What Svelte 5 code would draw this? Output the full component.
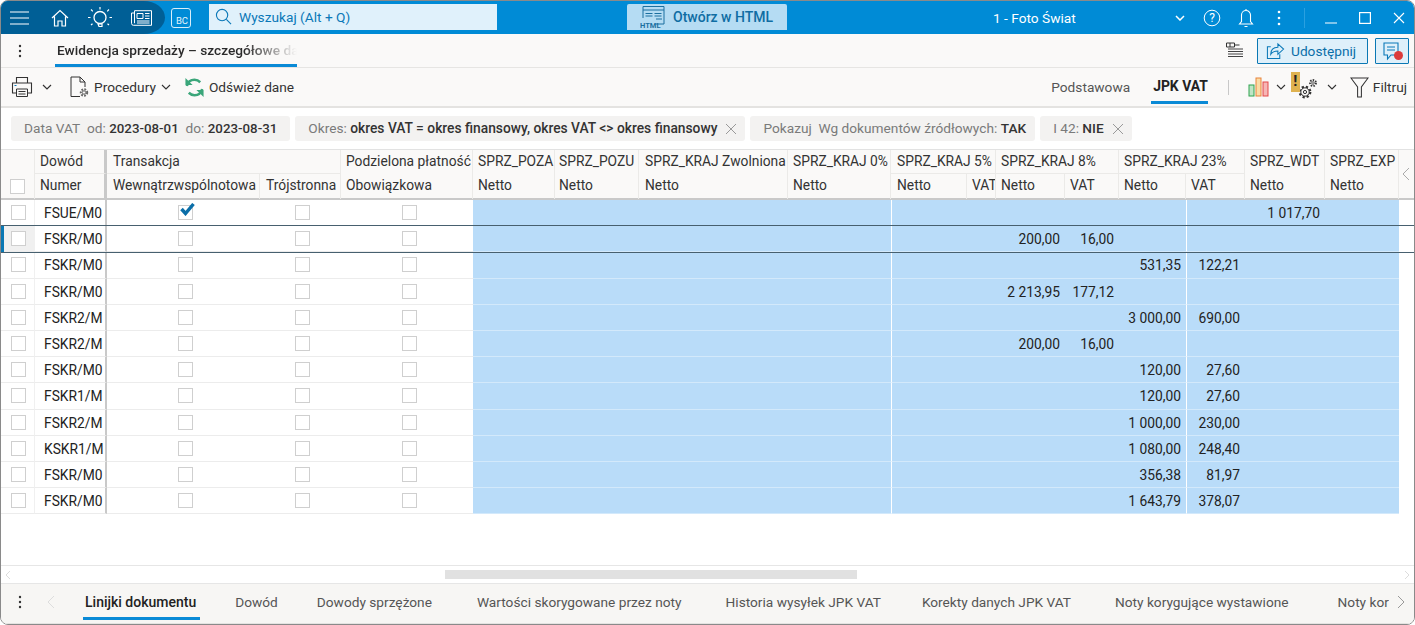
<script>
  const rows = [
    { doc: 'FSUE/M0', checked: true, v: { wdt: '1 017,70' } },
    { doc: 'FSKR/M0', selected: true, v: { n8: '200,00', v8: '16,00' } },
    { doc: 'FSKR/M0', v: { n23: '531,35', v23: '122,21' } },
    { doc: 'FSKR/M0', v: { n8: '2 213,95', v8: '177,12' } },
    { doc: 'FSKR2/M', v: { n23: '3 000,00', v23: '690,00' } },
    { doc: 'FSKR2/M', v: { n8: '200,00', v8: '16,00' } },
    { doc: 'FSKR/M0', v: { n23: '120,00', v23: '27,60' } },
    { doc: 'FSKR1/M', v: { n23: '120,00', v23: '27,60' } },
    { doc: 'FSKR2/M', v: { n23: '1 000,00', v23: '230,00' } },
    { doc: 'KSKR1/M', v: { n23: '1 080,00', v23: '248,40' } },
    { doc: 'FSKR/M0', v: { n23: '356,38', v23: '81,97' } },
    { doc: 'FSKR/M0', v: { n23: '1 643,79', v23: '378,07' } }
  ];
  const cols = ['poza', 'pozu', 'zw', 'k0', 'n5', 'v5', 'n8', 'v8', 'n23', 'v23', 'wdt', 'exp'];
  const tabs = ['Dowód', 'Dowody sprzężone', 'Wartości skorygowane przez noty', 'Historia wysyłek JPK VAT', 'Korekty danych JPK VAT', 'Noty korygujące wystawione'];
</script>

<div class="frame">
  <header class="topbar">
    <nav class="navzone">
      <svg class="ic ham" viewBox="0 0 20 14" width="20" height="14"><path d="M0 1h19M0 7h19M0 13h19" stroke="#fff" stroke-width="1.2" fill="none"/></svg>
      <svg class="ic" viewBox="0 0 18 18" width="18" height="18"><path d="M1 9 9 1.5 17 9M3.5 7.5V17h3.5v-5h4v5h3.5V7.5" stroke="#fff" stroke-width="1.2" fill="none"/></svg>
      <svg class="ic" viewBox="0 0 24 24" width="24" height="24"><circle cx="12" cy="11.5" r="6" stroke="#fff" stroke-width="1.3" fill="none"/><path d="M10 18h4v2.5h-3zM12 1v2.5M3 3.5 4.8 5.3M21 3.5l-1.8 1.8M0 11.500h2.500M21.500 11.500H24M3 19l1.500-1.300M21 19l-1.500-1.300" stroke="#fff" stroke-width="1.2" fill="none"/></svg>
      <svg class="ic" viewBox="0 0 21 16" width="21" height="16"><path d="M3.500.7h17v14.600H2.500a2 2 0 0 1-2-2V3h3M3.500.7v12.500" stroke="#fff" fill="none"/><path d="M6 3.500h6v5H6zM14 3.500h4.500M14 6h4.500M14 8.500h4.500M6 11h12.500M6 13h12.500" stroke="#fff" fill="none"/></svg>
    </nav>
    <div class="bc">BC</div>
    <div class="search">
      <svg viewBox="0 0 18 18" width="17" height="17"><circle cx="7.500" cy="7.500" r="6" stroke="#0a78b8" stroke-width="1.200" fill="none"/><path d="m12 12 5 5" stroke="#0a78b8" stroke-width="1.200"/></svg>
      <span>Wyszukaj (Alt + Q)</span>
    </div>
    <button class="html">
      <svg viewBox="0 0 26 24" width="26" height="24"><path d="M3 13V1.500h21V19h-8M3 5h21M5.500 8.500h7M14.500 8.500h7M5.500 11h7M14.500 11h7M16 14h6" stroke="#1b6f9f" fill="none"/><text x="0" y="23" class="htmltext">HTML</text></svg>
      <span>Otwórz w HTML</span>
    </button>
    <div class="company">1 - Foto Świat</div>
    <div class="winicons">
      <svg class="wchev" viewBox="0 0 10 6" width="10" height="6"><path d="m1 1 4 4 4-4" stroke="#fff" stroke-width="1.500" fill="none"/></svg>
      <svg class="mleft" viewBox="0 0 18 18" width="18" height="18"><circle cx="9" cy="9" r="7.800" stroke="#fff" fill="none"/><text x="9" y="13" class="qm">?</text></svg>
      <svg class="mleft2" viewBox="0 0 16 20" width="16" height="20"><path d="M1.500 16h13l-2-2.500V7a4.500 4.500 0 0 0-9 0v6.500zM8 1v1.500M6.500 18.500h3" stroke="#fff" stroke-width="1.100" fill="none"/></svg>
      <svg class="mleft3" viewBox="0 0 4 16" width="4" height="16"><circle cx="2" cy="2" r="1.300" fill="#fff"/><circle cx="2" cy="8" r="1.300" fill="#fff"/><circle cx="2" cy="14" r="1.300" fill="#fff"/></svg>
      <span class="vsep"></span>
      <svg class="wmin" viewBox="0 0 12 12" width="12" height="12"><path d="M0 11h12" stroke="#fff" stroke-width="1.200"/></svg>
      <svg class="wmax" viewBox="0 0 12 12" width="12" height="12"><rect x=".6" y=".6" width="10.800" height="10.800" stroke="#fff" stroke-width="1.200" fill="none"/></svg>
      <svg class="wmax" viewBox="0 0 12 12" width="12" height="12"><path d="m1 1 10 10M11 1 1 11" stroke="#fff" stroke-width="1.100"/></svg>
    </div>
  </header>

  <div class="titlebar">
    <svg class="dots" viewBox="0 0 4 14" width="4" height="14"><circle cx="2" cy="2" r="1.200" fill="#333"/><circle cx="2" cy="7" r="1.200" fill="#333"/><circle cx="2" cy="12" r="1.200" fill="#333"/></svg>
    <div class="pagetab"><span>Ewidencja sprzedaży – szczegółowe dane</span></div>
    <div class="grow"></div>
    <svg viewBox="0 0 19 17" width="19" height="17"><path d="M1.500 1h8v4h-8zM5 1v4M9.500 3h5" stroke="#333" fill="none"/><path d="M3 7h15M3 9.500h15M3 12h15M3 14.500h15" stroke="#444" stroke-width="1.100"/></svg>
    <button class="share">
      <svg viewBox="0 0 20 20" width="19" height="19"><path d="M5 6H1.500v12.500h13V14" stroke="#0a78b8" stroke-width="1.100" fill="none"/><path d="M5 14c0-5 3-7.500 7.500-7.500V3l6 5.500-6 5.500v-3.500C9 10.500 6.500 11.500 5 14z" stroke="#0a78b8" stroke-width="1.100" fill="none"/></svg>
      <span>Udostępnij</span>
    </button>
    <button class="comment">
      <svg viewBox="0 0 24 22" width="24" height="22"><path d="M3 2h14v12h-7l-3.500 4v-4H3z" stroke="#0a78b8" stroke-width="1.100" fill="#dff0fa"/><path d="M6 6h8M6 9h8" stroke="#0a78b8"/><circle cx="17.500" cy="14.500" r="4.500" fill="#dc3b3b"/></svg>
    </button>
  </div>

  <div class="toolbar">
    <svg viewBox="0 0 22 22" width="22" height="22"><path d="M5.500 7V1.500h11V7M5.500 17H1.500V7h19v10h-4" stroke="#333" stroke-width="1.100" fill="none"/><path d="M5.500 13h11v7.500h-11zM7.500 15.500h7M7.500 18h7" stroke="#333" fill="none"/><path d="M3.500 9.500h2" stroke="#0a78b8" stroke-width="1.200"/></svg>
    <svg class="chev c1" viewBox="0 0 10 6" width="10" height="6"><path d="m1 1 4 4 4-4" stroke="#333" stroke-width="1.200" fill="none"/></svg>
    <svg class="docic" viewBox="0 0 20 22" width="20" height="22"><path d="M10 20.500H1V1h9l5 5v5M10 1v5h5" stroke="#333" fill="none"/><circle cx="14" cy="16.500" r="3.200" stroke="#666" stroke-width="2" stroke-dasharray="1.800 1.200" fill="none"/><circle cx="14" cy="16.500" r="1.700" stroke="#666" fill="none"/></svg>
    <span class="tbtext t1">Procedury</span>
    <svg class="chev c2" viewBox="0 0 10 6" width="10" height="6"><path d="m1 1 4 4 4-4" stroke="#333" stroke-width="1.100" fill="none"/></svg>
    <svg class="refresh" viewBox="0 0 22 22" width="21" height="21"><path d="M3 9.500C4 5.500 7 3 11 3c2.500 0 4.500 1 6 2.500M19 12.500c-1 4-4 6.500-8 6.500-2.500 0-4.500-1-6-2.500" stroke="#3ba67a" stroke-width="2.600" fill="none"/><path d="M1.500 1v7.500H9zM20.500 21v-7.500H13z" fill="#3ba67a"/></svg>
    <span class="tbtext t2">Odśwież dane</span>
    <div class="grow"></div>
    <span class="view">Podstawowa</span>
    <span class="view active">JPK VAT</span>
    <span class="tsep"></span>
    <svg class="barsic" viewBox="0 0 22 20" width="22" height="20"><rect x="1" y="8" width="5" height="11" fill="#bfe5c6" stroke="#2ea44f"/><rect x="8" y="1" width="5" height="18" fill="#fbdca6" stroke="#e8833a"/><rect x="15" y="5" width="5" height="14" fill="#f6b5b5" stroke="#e34848"/></svg>
    <svg class="chev c3" viewBox="0 0 10 6" width="10" height="6"><path d="m1 1 4 4 4-4" stroke="#333" stroke-width="1.100" fill="none"/></svg>
    <div class="gearwrap">
      <svg viewBox="0 0 28 28" width="28" height="28"><circle cx="14" cy="20" r="5.300" stroke="#333" stroke-width="2.200" stroke-dasharray="2.200 2" fill="none"/><circle cx="14" cy="20" r="4.200" stroke="#333" fill="none"/><circle cx="14" cy="20" r="1.600" stroke="#333" fill="none"/><circle cx="22" cy="11" r="3" stroke="#333" stroke-width="1.800" stroke-dasharray="1.500 1.200" fill="none"/><circle cx="22" cy="11" r="1.300" stroke="#333" stroke-width=".8" fill="none"/></svg>
      <span class="warn">!</span>
    </div>
    <svg class="chev c4" viewBox="0 0 10 6" width="10" height="6"><path d="m1 1 4 4 4-4" stroke="#333" stroke-width="1.100" fill="none"/></svg>
    <svg class="funnel" viewBox="0 0 20 22" width="19" height="21"><path d="M1 1h18l-7 9.500V21H8V10.500z" stroke="#333" stroke-width="1.100" fill="none"/></svg>
    <span class="tbtext t3">Filtruj</span>
  </div>

  <div class="filters">
    <div class="chip"><span class="lab">Data VAT&nbsp; od:</span> <b class="date">2023-08-01</b><span class="lab">&nbsp;&nbsp;do:</span> <b class="date">2023-08-31</b></div>
    <div class="chip"><span class="lab">Okres:</span> <b class="long">okres VAT = okres finansowy, okres VAT &lt;&gt; okres finansowy</b><svg class="x" viewBox="0 0 10 10" width="10" height="10"><path d="m0 0 10 10M10 0 0 10" stroke="#999"/></svg></div>
    <div class="chip short"><span class="lab">Pokazuj&nbsp; Wg dokumentów źródłowych:</span> <b>TAK</b></div>
    <div class="chip"><span class="lab">I 42:</span> <b>NIE</b><svg class="x" viewBox="0 0 10 10" width="10" height="10"><path d="m0 0 10 10M10 0 0 10" stroke="#999"/></svg></div>
  </div>

  <div class="table">
    <div class="head">
      <div class="h sel"><span class="cb"></span></div>
      <div class="h under dow">Dowód</div>
      <div class="h under span2 p6">Transakcja</div>
      <div class="h">Podzielona płatność</div>
      <div class="h">SPRZ_POZA</div>
      <div class="h p4">SPRZ_POZU</div>
      <div class="h p6">SPRZ_KRAJ Zwolniona</div>
      <div class="h">SPRZ_KRAJ 0%</div>
      <div class="h under span2 p6">SPRZ_KRAJ 5%</div>
      <div class="h under span2">SPRZ_KRAJ 8%</div>
      <div class="h under span2">SPRZ_KRAJ 23%</div>
      <div class="h">SPRZ_WDT</div>
      <div class="h">SPRZ_EXP</div>
      <div class="h scroller">
        <svg viewBox="0 0 8 14" width="8" height="14"><path d="M7 1 1 7l6 6" stroke="#aaa" fill="none"/></svg>
      </div>

      <div class="h dow low">Numer</div>
      <div class="h low p6">Wewnątrzwspólnotowa</div>
      <div class="h low p6">Trójstronna</div>
      <div class="h low">Obowiązkowa</div>
      <div class="h low">Netto</div>
      <div class="h low p4">Netto</div>
      <div class="h low p6">Netto</div>
      <div class="h low">Netto</div>
      <div class="h low p6">Netto</div>
      <div class="h low">VAT</div>
      <div class="h low">Netto</div>
      <div class="h low">VAT</div>
      <div class="h low">Netto</div>
      <div class="h low">VAT</div>
      <div class="h low">Netto</div>
      <div class="h low">Netto</div>
    </div>

    {#each rows as r}
      <div class="row" class:selected={r.selected}>
        <div class="c first"><span class="cb"></span></div>
        <div class="c doc">{r.doc}</div>
        <div class="c chk"><span class="cb">{#if r.checked}<svg viewBox="0 0 15 13" width="15" height="13"><path d="m1.500 6 4 4.500 8-9.500" stroke="#0a6ea8" stroke-width="3.400" fill="none"/></svg>{/if}</span></div>
        <div class="c chk"><span class="cb"></span></div>
        <div class="c chk"><span class="cb"></span></div>
        {#each cols as k}
          <div class="c num" class:wl={k === 'n5' || k === 'v23'}>{r.v[k] ?? ''}</div>
        {/each}
      </div>
    {/each}
  </div>

  <div class="hscroll">
    <svg viewBox="0 0 6 10" width="6" height="10"><path d="M5 1 1 5l4 4" stroke="#ddd" fill="none"/></svg>
    <div class="track"><div class="thumb"></div></div>
    <svg viewBox="0 0 6 10" width="6" height="10"><path d="m1 1 4 4-4 4" stroke="#ddd" fill="none"/></svg>
  </div>

  <div class="tabs">
    <svg class="dots tabdots" viewBox="0 0 4 14" width="4" height="14"><circle cx="2" cy="2" r="1.200" fill="#333"/><circle cx="2" cy="7" r="1.200" fill="#333"/><circle cx="2" cy="12" r="1.200" fill="#333"/></svg>
    <svg class="tprev" viewBox="0 0 8 14" width="8" height="14"><path d="M7 1 1 7l6 6" stroke="#ddd" fill="none"/></svg>
    <div class="tab on">Linijki dokumentu</div>
    {#each tabs as t}<div class="tab">{t}</div>{/each}
    <div class="tab cut">Noty korygujące otrzymane</div>
    <svg class="tnext" viewBox="0 0 8 14" width="8" height="14"><path d="m1 1 6 6-6 6" stroke="#999" fill="none"/></svg>
  </div>
</div>

<style>
  :global(body) { margin: 0; background: #fff; }
  .frame {
    height: 625px; box-sizing: border-box; display: flex; flex-direction: column; overflow: hidden;
    font-family: Roboto, "Liberation Sans", sans-serif; font-size: 13.700px; color: #333;
    border: 1px solid #8a8a8a; border-radius: 8px; background: #fff;
  }
  svg { display: block; flex: none; }
  button { font: inherit; margin: 0; }
  .grow { flex: 1; }

  .topbar { height: 33px; flex: none; display: flex; align-items: center; background: #008bd6; }
  .topbar > * { flex: none; }
  .navzone {
    height: 100%; width: 164px; box-sizing: border-box; display: flex; align-items: center; padding-left: 9px;
    background: #005f96; border-radius: 0 22px 22px 0 / 0 17px 17px 0;
  }
  .navzone svg:nth-child(2) { margin-left: 21px; }
  .navzone svg:nth-child(3) { margin-left: 19px; }
  .navzone svg:nth-child(4) { margin-left: 19px; }
  .bc {
    width: 20px; height: 20px; margin-left: 6px; border: 1px solid #d8eefa; border-radius: 3px; box-sizing: border-box;
    color: #e6f4fc; font-size: 9.500px; line-height: 11px; display: flex; align-items: flex-end; justify-content: center; padding: 0 0 1px 2px;
  }
  .search {
    width: 288px; height: 26px; box-sizing: border-box; margin-left: 18px; margin-top: -2px; background: #e0f1fb; color: #0a78b8;
    display: flex; align-items: center; gap: 7px; padding-left: 6px;
  }
  .html {
    width: 160px; height: 26px; margin: -2px 0 0 130px; border: 0; background: #b5dcf3; color: #0f6da3; font-weight: 500; font-size: 14px;
    display: flex; align-items: center; gap: 7px; padding: 0 0 0 13px; border-radius: 2px 2px 0 0;
  }
  .htmltext { font-size: 7.500px; font-weight: 700; fill: #1b6f9f; font-family: Roboto, sans-serif; }
  .company { width: 180px; margin-left: 206px; color: #fff; }
  .winicons { display: flex; align-items: center; }
  .wchev { margin-left: 2px; }
  .qm { font-size: 12px; fill: #fff; text-anchor: middle; font-family: Roboto, sans-serif; }
  .mleft { margin-left: 18px; }
  .mleft2 { margin-left: 17px; }
  .mleft3 { margin-left: 23px; }
  .vsep { width: 1px; height: 20px; background: #2aa0e0; margin-left: 23px; }
  .wmin { margin-left: 20px; }
  .wmax { margin-left: 22px; }

  .titlebar { height: 34px; flex: none; display: flex; align-items: center; background: #faf9f8; border-bottom: 1px solid #e6e5e3; box-sizing: border-box; }
  .dots { margin-left: 17px; }
  .pagetab {
    width: 242px; margin-left: 33px; height: 33px; box-sizing: border-box; border-bottom: 3px solid #0a8ad6; padding: 8px 0 0 2px;
    overflow: hidden; white-space: nowrap; font-weight: 500; color: #2b2b2b;
  }
  .pagetab span { display: block; -webkit-mask-image: linear-gradient(90deg, #000 78%, transparent 100%); mask-image: linear-gradient(90deg, #000 78%, transparent 100%); }
  .share {
    width: 111px; height: 26px; margin-left: 13px; display: flex; align-items: center; gap: 6px; padding: 0 0 0 8px;
    background: #dff0fa; border: 1px solid #0a78b4; color: #0a6ea8; border-radius: 1px;
  }
  .comment {
    width: 34px; height: 26px; margin: 0 5px 0 7px; padding: 2px 0 0 5px; background: #dff0fa; border: 1px solid #0a78b4; border-radius: 1px;
  }

  .toolbar { height: 40px; flex: none; display: flex; align-items: center; background: #faf9f8; border-bottom: 2px solid #e4e3e1; box-sizing: border-box; padding-left: 10px; }
  .tbtext { color: #333; }
  .c1 { margin-left: 9px; }
  .docic { margin-left: 18px; }
  .t1 { margin-left: 4px; }
  .c2 { margin-left: 5px; }
  .refresh { margin-left: 13px; }
  .t2 { margin-left: 4px; }
  .view { height: 100%; box-sizing: border-box; display: flex; align-items: center; color: #555; }
  .view.active { margin-left: 21px; padding: 3px 0 0 2px; border-bottom: 3px solid #0a8ad6; color: #222; font-weight: 700; font-size: 13.900px; height: 36px; margin-top: -2px; }
  .tsep { width: 1px; height: 15px; background: #c8c8c8; margin-left: 20px; }
  .barsic { margin-left: 19px; }
  .c3 { margin-left: 6px; }
  .gearwrap { position: relative; width: 28px; height: 28px; margin-left: 5px; margin-top: -2px; }
  .warn { position: absolute; left: 0; top: 0; width: 9px; height: 20px; background: #dfb24f; color: #222; font-weight: 700; font-size: 15px; line-height: 18px; text-align: center; }
  .c4 { margin-left: 8px; }
  .funnel { margin-left: 13px; }
  .t3 { margin-left: 4px; margin-right: 7px; }

  .filters { height: 41px; flex: none; display: flex; align-items: center; gap: 5px; padding-left: 10px; box-sizing: border-box; }
  .chip {
    height: 25px; line-height: 25px; padding: 0 13px; background: #f3f2f1; border-radius: 3px; white-space: pre; flex: none;
  }
  .chip.short { padding-right: 9px; }
  .chip .lab { color: #7a7a7a; }
  .chip b { font-weight: 500; color: #333; }
  .chip .date { font-size: 13.300px; }
  .chip .long { font-size: 13.800px; }
  .x { display: inline-block; vertical-align: -1px; margin-left: 9px; margin-right: -4px; }

  .head, .row {
    display: grid;
    grid-template-columns: 34px 72px 153px 81px 132px 82px 84px 149px 103px 76px 29px 69px 54px 67px 59px 80px 74px 1fr;
  }
  .table { flex: 1; min-height: 0; border-top: 1px solid #e2e2e2; font-size: 13.800px; }
  .head {
    grid-template-rows: 24px 25px; background: #faf9f8; border-bottom: 2px solid #c9c9c9; height: 50px; box-sizing: border-box;
  }
  .h {
    grid-row: 1; padding: 3px 0 0 5px; white-space: nowrap; overflow: hidden; line-height: 17px; border-right: 1px solid #ebeae8; box-sizing: border-box; min-width: 0;
  }
  .h.p6 { padding-left: 6px; }
  .h.p4 { padding-left: 4px; }
  .h.low { grid-row: 2; padding-top: 3px; }
  .h.under { border-bottom: 1px solid #ebeae8; }
  .span2 { grid-column: span 2; }
  .h.dow { border-right: 3px solid #c9c9c9; }
  .h.sel { grid-row: 1 / span 2; padding: 29px 0 0 9px; overflow: visible; }
  .h.scroller { grid-column: 18; grid-row: 1 / span 2; border: 0; padding: 17px 0 0 3px; }

  .cb { display: block; width: 13px; height: 13px; border: 1px solid #cfcfcf; background: #fff; position: relative; }
  .cb svg { position: absolute; left: 1px; top: -3px; }
  .row { height: 26.200px; box-sizing: border-box; position: relative; }
  .row.selected { outline: 1px solid #47606f; z-index: 1; }
  .row.selected::before { content: ""; position: absolute; left: 0; top: 0; bottom: 0; width: 3px; background: #0a78b4; }
  .c { border-bottom: 1px solid #ececec; box-sizing: border-box; min-width: 0; overflow: hidden; white-space: nowrap; display: flex; align-items: center; }
  .num, .doc { padding-top: 1px; }
  .first { padding-left: 10px; border-right: 1px solid #f0f0f0; }
  .selected .first { background: #f0f0f0; }
  .doc { padding-left: 9px; border-right: 2px solid #c9c9c9; color: #222; }
  .chk { justify-content: center; padding-left: 4px; }
  .num { background: #b9dcf9; justify-content: flex-end; padding-right: 5px; color: #222; border-bottom-color: #d3e9fb; }
  .wl { border-left: 1px solid #fff; }

  .hscroll { height: 19px; flex: none; display: flex; align-items: center; border-top: 1px solid #e6e6e6; border-bottom: 1px solid #e6e6e6; box-sizing: border-box; padding: 0 4px; }
  .track { flex: 1; padding-left: 434px; }
  .thumb { width: 412px; height: 9px; background: #e1e1e1; }

  .tabs { height: 39px; flex: none; display: flex; align-items: flex-start; background: #f7f6f4; border-bottom: 1px solid #e4e3e1; box-sizing: content-box; }
  .tabdots { margin: 11px 0 0 17px; }
  .tprev { margin: 11px 0 0 25px; }
  .tab { height: 36px; box-sizing: border-box; padding-top: 10px; line-height: 17px; white-space: nowrap; color: #555; flex: none; }
  .tab.on { padding: 10px 4px 0 2px; margin-left: 28px; color: #222; font-weight: 500; font-size: 14px; border-bottom: 3px solid #0a8ad6; }
  .tab:nth-child(4) { margin-left: 35px; }
  .tab:nth-child(5) { margin-left: 39px; }
  .tab:nth-child(6) { margin-left: 45px; }
  .tab:nth-child(7) { margin-left: 44px; }
  .tab:nth-child(8) { margin-left: 41px; }
  .tab:nth-child(9) { margin-left: 44px; }
  .tab.cut { margin-left: 49px; width: 51px; overflow: hidden; }
  .tnext { margin: 11px 0 0 8px; }
</style>
